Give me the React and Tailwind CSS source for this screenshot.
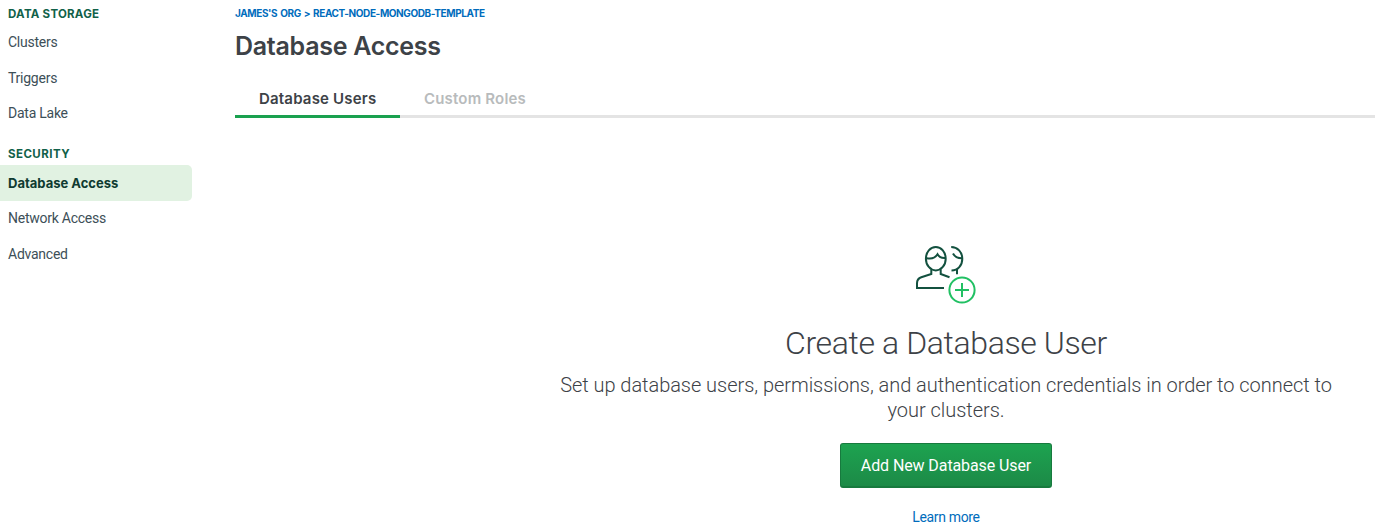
const storage = ["Clusters", "Triggers", "Data Lake"];
const security = ["Database Access", "Network Access", "Advanced"];

function NavItem({ label, active }) {
  return (
    <a
      className={
        active
          ? "flex h-9 items-center rounded-r-[5px] bg-[#e1f2e2] pt-px pl-2 font-[Inter] text-[13px] font-bold text-[#0f3b31]"
          : "flex h-[35.5px] items-center pl-2 text-[14px] tracking-[-0.25px] text-[#3d4f58]"
      }
    >
      {label}
    </a>
  );
}

function UsersIcon() {
  return (
    <svg width="60" height="60" viewBox="0 0 60 60" fill="none" strokeWidth="2">
      <g stroke="#13513f">
        <ellipse cx="19.8" cy="12.7" rx="9.9" ry="11.7" />
        <path d="M10 12C14.5 13.2 19 12.2 21.5 8.3C23 11 25.5 12.4 29.6 12" />
        <path d="M15.3 23.3V28L5.3 31.3C2.2 32.4 1 34.3 1 37.3V42H28" />
        <path d="M24.7 23.3V28L33.5 31.3" />
        <path d="M35.2 1C41.5 1 46.3 6 46.3 12.7C46.3 19.4 41.9 24.5 35.5 24.5" />
        <path d="M37 7.5C38.6 10.5 41.6 12.3 46.2 12.2M41 23V28.3" />
      </g>
      <g stroke="#21c063">
        <circle cx="46" cy="44" r="12.6" />
        <path d="M39 44H53M46 37V51" />
      </g>
    </svg>
  );
}

export default function App() {
  return (
    <div className="flex h-[529px] w-full overflow-hidden bg-white font-[Roboto,sans-serif]">
      <nav className="w-[192px] shrink-0">
        <h2 className="mt-1 h-[21px] pl-2 font-[Inter] text-[11.5px] leading-5 font-bold tracking-[0.25px] text-[#116149]">
          DATA STORAGE
        </h2>
        {storage.map((label) => (
          <NavItem key={label} label={label} />
        ))}
        <h2 className="mt-[12.5px] h-[21px] pl-2 font-[Inter] text-[11.5px] leading-5 font-bold tracking-[0.45px] text-[#116149]">
          SECURITY
        </h2>
        {security.map((label) => (
          <NavItem key={label} label={label} active={label === "Database Access"} />
        ))}
      </nav>

      <main className="ml-[43px] w-[1422px] shrink-0">
        <div className="mt-[5px] h-[17px] font-[Inter] text-[10px] leading-4 font-bold text-[#006cbc]">
          <span className="tracking-[-0.4px] [word-spacing:1px]">
            JAMES'S ORG &gt; REACT-NODE-MONGODB-TEMPLATE
          </span>
        </div>
        <h1 className="mt-2 h-8 font-[Inter] text-[25px] leading-8 font-semibold tracking-[-0.28px] text-[#3d4247]">
          Database Access
        </h1>
        <div className="mt-[18px] flex h-[38px] border-b-[3px] border-[#e4e4e4] font-[Inter] text-[15px] leading-[38px] font-semibold tracking-[0.18px]">
          <div className="h-[38px] w-[165px] shrink-0 border-b-[3px] border-[#1aa14f] pl-6 whitespace-nowrap text-[#3d4247]">
            Database Users
          </div>
          <div className="pl-6 text-[#b8bbbc]">Custom Roles</div>
        </div>

        <section className="flex flex-col items-center pt-32 text-center">
          <UsersIcon />
          <h2 className="mt-[17px] text-[32px] leading-10 font-light tracking-[-0.38px] whitespace-nowrap text-[#3d4247]">
            Create a Database User
          </h2>
          <p className="mt-[10px] text-[20px] leading-[25px] font-light tracking-[-0.04px] whitespace-nowrap text-[#3d4247]">
            Set up database users, permissions, and authentication credentials in order to connect to
            <br />
            your clusters.
          </p>
          <button className="mt-5 h-[45px] w-[212px] rounded-[3px] border border-b-2 border-[#177a3e] bg-linear-to-b from-[#1da350] to-[#1c8a47] pt-0.5 text-[16px] tracking-[-0.1px] text-white">
            Add New Database User
          </button>
          <a className="mt-[19px] text-[14px] leading-5 tracking-[-0.35px] text-[#006cbc]">Learn more</a>
        </section>
      </main>
    </div>
  );
}
